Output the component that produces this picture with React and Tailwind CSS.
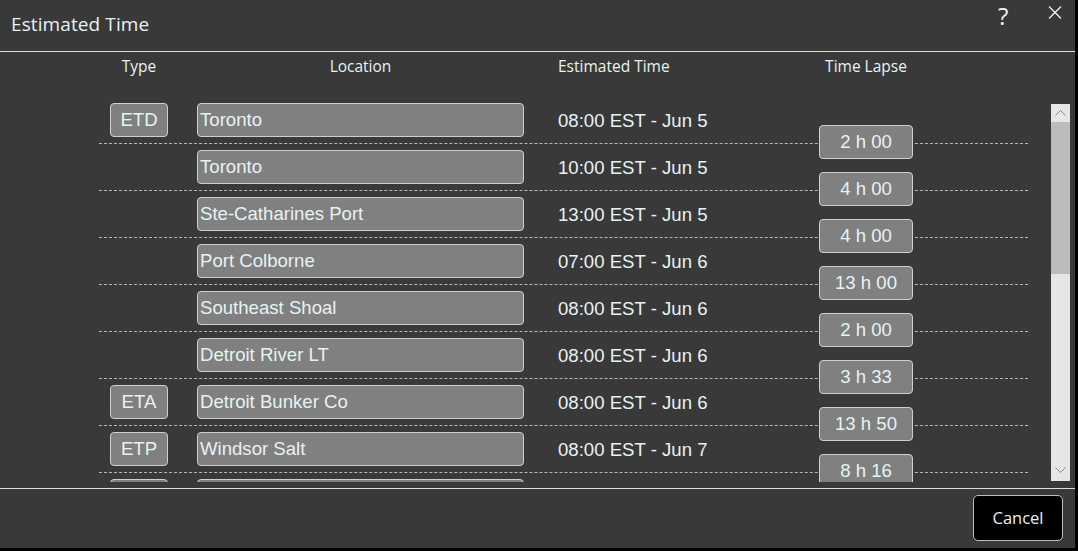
const rows = [
  { type: 'ETD', loc: 'Toronto', time: '08:00 EST - Jun 5', lapse: '2 h 00' },
  { type: '', loc: 'Toronto', time: '10:00 EST - Jun 5', lapse: '4 h 00' },
  { type: '', loc: 'Ste-Catharines Port', time: '13:00 EST - Jun 5', lapse: '4 h 00' },
  { type: '', loc: 'Port Colborne', time: '07:00 EST - Jun 6', lapse: '13 h 00' },
  { type: '', loc: 'Southeast Shoal', time: '08:00 EST - Jun 6', lapse: '2 h 00' },
  { type: '', loc: 'Detroit River LT', time: '08:00 EST - Jun 6', lapse: '3 h 33' },
  { type: 'ETA', loc: 'Detroit Bunker Co', time: '08:00 EST - Jun 6', lapse: '13 h 50' },
  { type: 'ETP', loc: 'Windsor Salt', time: '08:00 EST - Jun 7', lapse: '8 h 16' },
  { type: ' ', loc: ' ', time: '', lapse: '' },
]

const box = 'h-[34px] bg-[#808080] border border-[#cfcfcf] rounded-[4px] text-[18.6px] leading-none'

function Row({ r }) {
  return (
    <div className="relative flex items-center h-[47px] border-b border-dashed border-[#b5b5b5]">
      <div className="w-[11px] shrink-0" />
      {r.type ? (
        <div className={`${box} w-[58px] shrink-0 flex items-center justify-center`}>{r.type.trim()}</div>
      ) : (
        <div className="w-[58px] shrink-0" />
      )}
      <div className="w-[29px] shrink-0" />
      <div className={`${box} w-[327px] shrink-0 flex items-center pl-[2px]`}>{r.loc.trim()}</div>
      <div className="w-[34px] shrink-0" />
      <div className="text-[18.6px] mt-[1px]">{r.time}</div>
      {r.lapse && (
        <div className={`${box} absolute left-[720px] top-[28px] w-[94px] flex items-center justify-center`}>
          {r.lapse}
        </div>
      )}
    </div>
  )
}

export default function App() {
  return (
    <div className="w-[1078px] h-[551px] bg-black">
      <div
        className="w-[1075px] h-[548px] bg-[#393939] text-[#e6f3f3] flex flex-col"
        style={{ fontFamily: '"Open Sans", "Liberation Sans", sans-serif' }}
      >
        {/* title bar */}
        <div className="relative h-[52px] shrink-0 border-b border-[#dcdcdc] flex items-center pl-[11px]">
          <span className="text-[19px] tracking-[0.1px] -mt-[3px]">Estimated Time</span>
          <span className="absolute left-[998px] top-[1px] text-[24px] leading-[30px]">?</span>
          <svg className="absolute left-[1048px] top-[6px]" width="14" height="13" viewBox="0 0 14 13">
            <path d="M1 0.5 L13 12.5 M13 0.5 L1 12.5" stroke="#e6f3f3" strokeWidth="1.3" fill="none" />
          </svg>
        </div>

        {/* column headers */}
        <div className="h-[45px] shrink-0 flex text-[15.5px] pt-[3px]">
          <div className="w-[99px]" />
          <div className="w-[11px]" />
          <div className="w-[58px] text-center">Type</div>
          <div className="w-[29px]" />
          <div className="w-[327px] text-center">Location</div>
          <div className="w-[34px]" />
          <div className="w-[110px] text-center whitespace-nowrap">Estimated Time</div>
          <div className="w-[151px]" />
          <div className="w-[94px] text-center whitespace-nowrap">Time Lapse</div>
        </div>

        {/* list */}
        <div className="relative h-[385px] shrink-0 flex overflow-hidden" style={{ fontFamily: '"Liberation Sans", Arial, sans-serif' }}>
          <div className="w-[99px] shrink-0" />
          <div className="w-[929px] shrink-0">
            {rows.map((r, i) => (
              <Row key={i} r={r} />
            ))}
          </div>
          <div className="w-[23px] shrink-0" />
          <div className="mt-[7px] w-[19px] h-[377px] bg-[#e6e6e6] flex flex-col shrink-0">
            <div className="h-[18px] flex items-center justify-center">
              <svg width="11" height="6" viewBox="0 0 11 6">
                <path d="M0.5 5.5 L5.5 0.5 L10.5 5.5" stroke="#8a8a8a" strokeWidth="1" fill="none" />
              </svg>
            </div>
            <div className="h-[152px] bg-[#bcbcbc]" />
            <div className="flex-1" />
            <div className="h-[14px] flex items-start justify-center">
              <svg width="11" height="6" viewBox="0 0 11 6">
                <path d="M0.5 0.5 L5.5 5.5 L10.5 0.5" stroke="#8a8a8a" strokeWidth="1" fill="none" />
              </svg>
            </div>
          </div>
        </div>

        {/* footer */}
        <div className="mt-[6px] border-t border-[#dcdcdc] flex-1 flex justify-end items-start pt-[6px] pr-[12px]">
          <button className="w-[90px] h-[46px] bg-black border border-[#bdbdbd] rounded-[5px] text-[16.5px] text-[#e6f3f3]">
            Cancel
          </button>
        </div>
      </div>
    </div>
  )
}
